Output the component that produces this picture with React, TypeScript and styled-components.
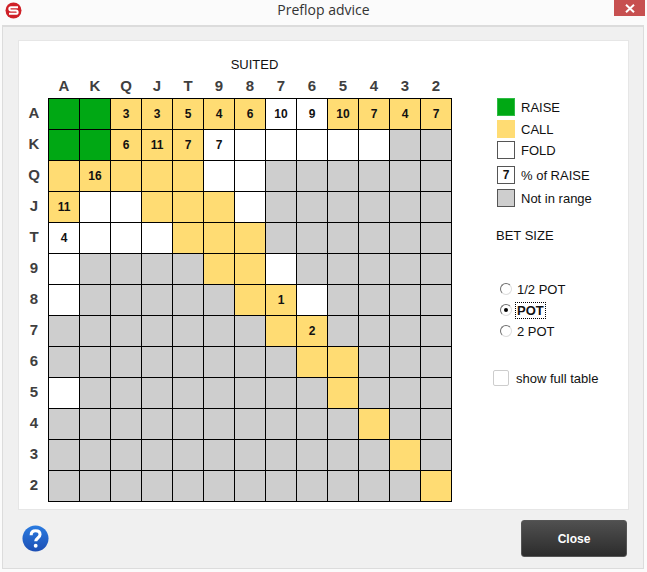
import React from "react";
import styled, { createGlobalStyle } from "styled-components";

const GlobalStyle = createGlobalStyle`
  html, body {
    margin: 0;
    padding: 0;
    background: #fbfbfb;
  }
`;

const COLUMNS = ["A", "K", "Q", "J", "T", "9", "8", "7", "6", "5", "4", "3", "2"];

// r = raise, c = call, f = fold, n = not in range, digits = % of raise
const RANGE = [
  "r r c3 c3 c5 c4 c6 f10 f9 c10 c7 c4 c7",
  "r r c6 c11 c7 f7 f f f f f n n",
  "c c16 c c c f f n n n n n n",
  "c11 f f c c c f n n n n n n",
  "f4 f f f c c c n n n n n n",
  "f n n n n c c f n n n n n",
  "f n n n n n c c1 f n n n n",
  "n n n n n n n c c2 n n n n",
  "n n n n n n n n c c n n n",
  "f n n n n n n n n c n n n",
  "n n n n n n n n n n c n n",
  "n n n n n n n n n n n c n",
  "n n n n n n n n n n n n c",
].map((row) => row.split(" "));

const COLORS: Record<string, string> = {
  r: "#00a814",
  c: "#ffdc73",
  f: "#ffffff",
  n: "#cecece",
};

const Window = styled.div`
  width: 647px;
  height: 572px;
  display: flex;
  flex-direction: column;
  font-family: "Liberation Sans", Arial, sans-serif;
  color: #111;
  overflow: hidden;
`;

const TitleBar = styled.div`
  height: 25px;
  flex: none;
  display: grid;
  grid-template-columns: 1fr auto 1fr;
  align-items: start;
`;

const Logo = styled.svg`
  display: block;
  width: 17px;
  height: 17px;
  margin: 2px 0 0 5px;
`;

const Title = styled.div`
  font-family: "Open Sans", sans-serif;
  font-size: 14px;
  line-height: 20px;
  color: #333;
`;

const CloseCross = styled.div`
  justify-self: end;
  width: 31px;
  height: 16px;
  margin-right: 2px;
  background: #c75050;
  display: flex;
  align-items: center;
  justify-content: center;
`;

const Frame = styled.div`
  flex: 1;
  margin: 0 3px 3px 2px;
  border: 1px solid #dcdcdc;
  border-top-width: 2px;
  background: #f0f0f0;
  display: flex;
  flex-direction: column;
`;

const Card = styled.div`
  margin: 13px 14px 0 15px;
  height: 470px;
  box-sizing: border-box;
  border: 1px solid #e6e6e6;
  background: #fff;
  display: flex;
`;

const TableSide = styled.div`
  width: 433px;
  flex: none;
  display: flex;
  flex-direction: column;
  padding-top: 16px;
`;

const SuitedLabel = styled.div`
  height: 16px;
  line-height: 16px;
  font-size: 13px;
  text-align: center;
  padding-left: 38px;
`;

const Matrix = styled.div`
  margin-top: 4px;
  display: grid;
  grid-template-columns: 29px 404px;
  grid-template-rows: 21px 404px;
`;

const ColumnHeads = styled.div`
  grid-column: 2;
  padding: 0 1px;
  display: grid;
  grid-template-columns: repeat(13, 30px);
  column-gap: 1px;
`;

const RowHeads = styled.div`
  grid-column: 1;
  margin-top: -2px;
  padding: 1px 0 1px 1px;
  display: grid;
  grid-template-rows: repeat(13, 30px);
  row-gap: 1px;
`;

const Head = styled.div`
  display: flex;
  align-items: center;
  justify-content: center;
  font-size: 15px;
  font-weight: bold;
  color: #3f3f3f;
`;

const ColumnHead = styled(Head)`
  height: 16px;
`;

const Board = styled.div`
  grid-column: 2;
  padding: 1px;
  background: #000;
  display: grid;
  grid-template-columns: repeat(13, 30px);
  grid-auto-rows: 30px;
  gap: 1px;
`;

const Cell = styled.div<{ $kind: string }>`
  background: ${(p) => COLORS[p.$kind]};
  display: flex;
  align-items: center;
  justify-content: center;
  font-size: 12px;
  font-weight: bold;
  color: #111;
`;

const Sidebar = styled.div`
  flex: 1;
  display: flex;
  flex-direction: column;
  padding: 57px 0 0 45px;
  font-size: 13px;
`;

const LegendRow = styled.div<{ $top: number }>`
  display: flex;
  align-items: center;
  gap: 6px;
  margin-top: ${(p) => p.$top}px;
  height: 18px;
`;

const Swatch = styled.div<{ $fill: string; $edge: string }>`
  box-sizing: border-box;
  width: 18px;
  height: 18px;
  flex: none;
  background: ${(p) => p.$fill};
  border: 1px solid ${(p) => p.$edge};
  display: flex;
  align-items: center;
  justify-content: center;
  font-size: 12px;
  font-weight: bold;
`;

const BetSize = styled.div`
  margin: 21px 0 0 -1px;
  height: 16px;
  line-height: 16px;
`;

const RadioGroup = styled.div`
  margin-top: 36px;
  display: flex;
  flex-direction: column;
  gap: 3px;
`;

const RadioRow = styled.div`
  display: flex;
  align-items: center;
  height: 18px;
  gap: 5px;
`;

const RadioDot = styled.span<{ $on?: boolean }>`
  box-sizing: border-box;
  width: 12px;
  height: 12px;
  margin-left: 3px;
  flex: none;
  border-radius: 50%;
  border: 1px solid;
  border-color: #6f6f6f #dedede #dedede #6f6f6f;
  background: #fff;
  display: flex;
  align-items: center;
  justify-content: center;

  &::after {
    content: "";
    width: 4px;
    height: 4px;
    border-radius: 50%;
    background: ${(p) => (p.$on ? "#000" : "transparent")};
  }
`;

const RadioText = styled.span<{ $on?: boolean }>`
  font-weight: ${(p) => (p.$on ? "bold" : "normal")};
  outline: ${(p) => (p.$on ? "1px dotted #000" : "none")};
  margin-left: ${(p) => (p.$on ? "-1px" : "0")};
  padding: ${(p) => (p.$on ? "0 1px" : "0")};
`;

const CheckRow = styled.div`
  margin: 30px 0 0 -4px;
  display: flex;
  align-items: center;
  gap: 7px;
  height: 16px;
`;

const CheckBox = styled.span`
  box-sizing: border-box;
  width: 16px;
  height: 16px;
  flex: none;
  background: #fff;
  border: 1px solid #cdcdcd;
  border-radius: 2px;
`;

const Footer = styled.div`
  flex: 1;
  display: flex;
  align-items: flex-start;
  justify-content: space-between;
  padding: 10px 16px 0 19px;
`;

const HelpIcon = styled.svg`
  display: block;
  width: 27px;
  height: 27px;
  margin-top: 5px;
`;

const CloseButton = styled.button`
  width: 106px;
  height: 37px;
  padding: 0;
  border: 1px solid #555;
  border-radius: 3px;
  background: linear-gradient(#505050, #2c2c2c);
  color: #fff;
  font-family: "Liberation Sans", Arial, sans-serif;
  font-size: 12px;
  font-weight: bold;
`;

const App: React.FC = () => {
  return (
    <Window>
      <GlobalStyle />
      <TitleBar>
        <Logo viewBox="0 0 17 17">
          <circle cx="8.5" cy="8.5" r="8" fill="#cf2027" />
          <path
            d="M13 5.2H6a1.6 1.6 0 0 0 0 3.3h5a1.6 1.6 0 0 1 0 3.3H4"
            fill="none"
            stroke="#fff"
            strokeWidth="2"
          />
        </Logo>
        <Title>Preflop advice</Title>
        <CloseCross>
          <svg width="10" height="9" viewBox="0 0 10 9">
            <path d="M1 0.8L9 8.2M9 0.8L1 8.2" stroke="#fff" strokeWidth="2" />
          </svg>
        </CloseCross>
      </TitleBar>
      <Frame>
        <Card>
          <TableSide>
            <SuitedLabel>SUITED</SuitedLabel>
            <Matrix>
              <ColumnHeads>
                {COLUMNS.map((c) => (
                  <ColumnHead key={c}>{c}</ColumnHead>
                ))}
              </ColumnHeads>
              <RowHeads>
                {COLUMNS.map((c) => (
                  <Head key={c}>{c}</Head>
                ))}
              </RowHeads>
              <Board>
                {RANGE.map((row, r) =>
                  row.map((cell, i) => (
                    <Cell key={`${r}-${i}`} $kind={cell[0]}>
                      {cell.slice(1)}
                    </Cell>
                  ))
                )}
              </Board>
            </Matrix>
          </TableSide>
          <Sidebar>
            <LegendRow $top={0}>
              <Swatch $fill="#00a814" $edge="#2fbb45" />
              RAISE
            </LegendRow>
            <LegendRow $top={4}>
              <Swatch $fill="#ffdc73" $edge="#ffdc73" />
              CALL
            </LegendRow>
            <LegendRow $top={3}>
              <Swatch $fill="#fff" $edge="#555" />
              FOLD
            </LegendRow>
            <LegendRow $top={7}>
              <Swatch $fill="#fff" $edge="#555">
                7
              </Swatch>
              % of RAISE
            </LegendRow>
            <LegendRow $top={5}>
              <Swatch $fill="#cecece" $edge="#555" />
              Not in range
            </LegendRow>
            <BetSize>BET SIZE</BetSize>
            <RadioGroup>
              <RadioRow>
                <RadioDot />
                <RadioText>1/2 POT</RadioText>
              </RadioRow>
              <RadioRow>
                <RadioDot $on />
                <RadioText $on>POT</RadioText>
              </RadioRow>
              <RadioRow>
                <RadioDot />
                <RadioText>2 POT</RadioText>
              </RadioRow>
            </RadioGroup>
            <CheckRow>
              <CheckBox />
              show full table
            </CheckRow>
          </Sidebar>
        </Card>
        <Footer>
          <HelpIcon viewBox="0 0 28 28">
            <defs>
              <linearGradient id="helpBlue" x1="0" y1="0" x2="0" y2="1">
                <stop offset="0" stopColor="#2a7be0" />
                <stop offset="1" stopColor="#1d4fb4" />
              </linearGradient>
            </defs>
            <circle cx="14" cy="14" r="13.5" fill="url(#helpBlue)" />
            <path
              d="M9.500 10.500c0-3 2-4.500 4.600-4.500 2.800 0 4.600 1.600 4.600 3.900 0 3.400-4.500 3.600-4.500 7"
              fill="none"
              stroke="#fff"
              strokeWidth="3.200"
            />
            <circle cx="14.200" cy="21.500" r="2" fill="#fff" />
          </HelpIcon>
          <CloseButton>Close</CloseButton>
        </Footer>
      </Frame>
    </Window>
  );
};

export default App;
